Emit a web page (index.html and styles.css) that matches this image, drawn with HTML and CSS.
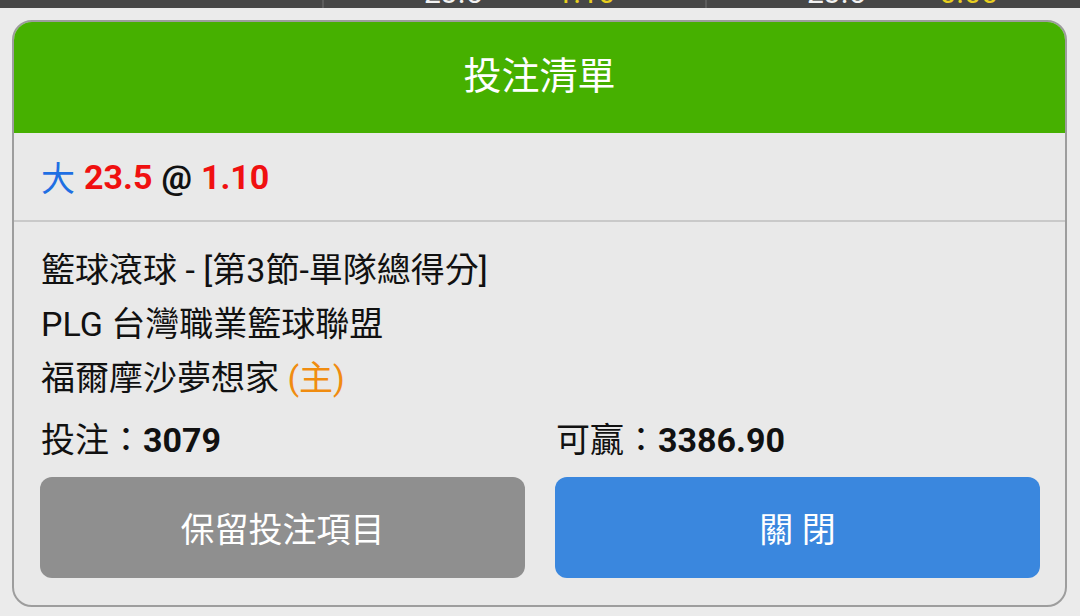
FILE: index.html
```html
<!DOCTYPE html>
<html>
<head>
<meta charset="utf-8">
<title>投注清單</title>
<meta name=viewport content="width=device-width, initial-scale=1">
<link rel="stylesheet" href="styles.css">
</head>
<body>

<div class=odds-strip>
 <div class=odds-cell></div>
 <div class=odds-cell><span class=line>23.5</span><span class=price>1.10</span></div>
 <div class=odds-cell><span class=line>23.5</span><span class=price>0.00</span></div>
</div>

<div class=slip>
 <div class=slip-head>投注清單</div>
 <div class=slip-pick>
  <span class=side>大</span> <span class=hl>23.5</span> @ <span class=hl>1.10</span>
 </div>
 <div class=slip-body>
  <div class=info>籃球滾球 - [第3節-單隊總得分]</div>
  <div class=info>PLG 台灣職業籃球聯盟</div>
  <div class=info>福爾摩沙夢想家 <span class=home>(主)</span></div>
  <div class=grid>
   <div class=amount>投注：<b>3079</b></div>
   <div class=amount>可贏：<b>3386.90</b></div>
   <button class="btn keep" type=button>保留投注項目</button>
   <button class="btn close" type=button>關 閉</button>
  </div>
 </div>
</div>

</body>
</html>
```

FILE: styles.css
```css
body {
 margin:0;
 background-color:#ebebeb;
 font-family:Roboto,"Liberation Sans","Noto Sans CJK TC",sans-serif;
 color:#111;
}
.odds-strip {
 height:8px;
 overflow:hidden;
 display:flex;
 align-items:flex-end;
 background-color:#474747;
}
.odds-cell {
 display:flex;
 align-items:flex-end;
 flex:none;
 height:8px;
 font-size:30px;
 line-height:30px;
 border-left:2px solid #5c5c5c;
}
.odds-cell:first-child {
 width:322px;
 border-left:none;
}
.odds-cell:nth-child(2) { width:381px; }
.odds-cell:nth-child(3) { flex:1; }
.odds-cell .line {
 color:#f2f2f2;
 margin-left:100px;
}
.odds-cell .price {
 color:#e8cf1f;
 margin-left:74px;
}
.slip {
 margin:12px 13px 0 12px;
 border:2px solid #9d9d9d;
 border-radius:20px;
 background-color:#e9e9e9;
 overflow:hidden;
}
.slip-head {
 margin:-2px -2px 0 -2px;
 height:113px;
 box-sizing:border-box;
 padding-bottom:8px;
 display:flex;
 align-items:center;
 justify-content:center;
 background-color:#46b000;
 color:#fff;
 font-size:38px;
 border-radius:20px 20px 0 0;
}
.slip-pick {
 height:87px;
 display:flex;
 align-items:center;
 gap:9px;
 padding-left:27px;
 font-size:34px;
 font-weight:bold;
 border-bottom:2px solid #c9c9c9;
}
.slip-pick .side {
 color:#1f6fe3;
 font-weight:normal;
}
.slip-pick .hl { color:#f01010; }
.slip-body {
 padding:21px 25px 27px 26px;
}
.info {
 font-size:34px;
 line-height:54px;
 padding-left:1px;
}
.home { color:#f08c10; }
.grid {
 display:grid;
 grid-template-columns:1fr 1fr;
 column-gap:30px;
 row-gap:10px;
 margin-top:8px;
}
.amount {
 font-size:34px;
 line-height:54px;
 padding-left:1px;
}
.btn {
 height:101px;
 border:none;
 border-radius:12px;
 color:#fff;
 font-size:34px;
 font-family:Roboto,"Liberation Sans","Noto Sans CJK TC",sans-serif;
}
.keep { background-color:#8f8f8f; }
.close { background-color:#3a87de; }
```
